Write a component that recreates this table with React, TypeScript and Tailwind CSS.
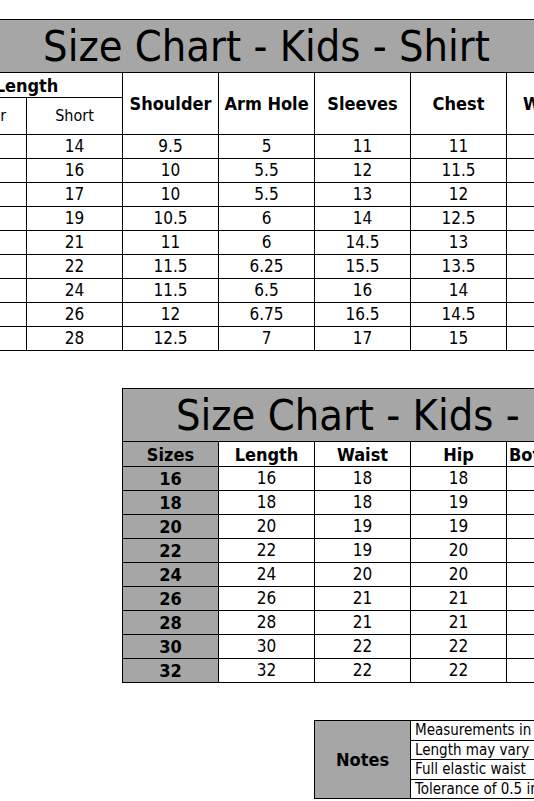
import React from "react";

const shirtRows = [
  ["14", "9.5", "5", "11", "11"],
  ["16", "10", "5.5", "12", "11.5"],
  ["17", "10", "5.5", "13", "12"],
  ["19", "10.5", "6", "14", "12.5"],
  ["21", "11", "6", "14.5", "13"],
  ["22", "11.5", "6.25", "15.5", "13.5"],
  ["24", "11.5", "6.5", "16", "14"],
  ["26", "12", "6.75", "16.5", "14.5"],
  ["28", "12.5", "7", "17", "15"],
];

const pantRows = [
  ["16", "16", "18", "18"],
  ["18", "18", "18", "19"],
  ["20", "20", "19", "19"],
  ["22", "22", "19", "20"],
  ["24", "24", "20", "20"],
  ["26", "26", "21", "21"],
  ["28", "28", "21", "21"],
  ["30", "30", "22", "22"],
  ["32", "32", "22", "22"],
];

const notes = [
  "Measurements in inches",
  "Length may vary by style",
  "Full elastic waist",
  "Tolerance of 0.5 inch",
];

const cell = "border-r border-b border-black flex items-center justify-center whitespace-nowrap overflow-hidden";

export default function App() {
  return (
    <div className="w-[534px] h-[801px] overflow-hidden bg-white text-black font-['DejaVu_Sans_Condensed','DejaVu_Sans',sans-serif]">
      <div className="pt-[19px]">
        {/* Shirt table */}
        <div className="ml-[-70px] w-max grid grid-cols-[repeat(7,96px)] grid-rows-[53px_25px_37px_repeat(9,24px)] border-l border-t border-black">
          <div className={`${cell} col-span-7 bg-[#a6a6a6] text-[43px] leading-none`}>
            Size Chart - Kids - Shirt
          </div>
          <div className={`${cell} col-span-2 font-bold text-[18px]`}>Length</div>
          <div className={`${cell} row-span-2 font-bold text-[18px]`}>Shoulder</div>
          <div className={`${cell} row-span-2 font-bold text-[18px]`}>Arm Hole</div>
          <div className={`${cell} row-span-2 font-bold text-[18px]`}>Sleeves</div>
          <div className={`${cell} row-span-2 font-bold text-[18px]`}>Chest</div>
          <div className={`${cell} row-span-2 font-bold text-[18px] !justify-start pl-[16px]`}>Waist</div>
          <div className={`${cell} text-[16px]`}>Regular</div>
          <div className={`${cell} text-[16px]`}>Short</div>
          {shirtRows.map((r, i) => (
            <React.Fragment key={i}>
              <div className={cell}></div>
              {r.map((v, j) => (
                <div key={j} className={`${cell} text-[17px]`}>{v}</div>
              ))}
              <div className={cell}></div>
            </React.Fragment>
          ))}
        </div>

        {/* Pant table */}
        <div className="mt-[37px] ml-[122px] w-max grid grid-cols-[repeat(6,96px)] grid-rows-[53px_25px_repeat(9,24px)] border-l border-t border-black">
          <div className={`${cell} col-span-6 bg-[#a6a6a6] text-[43px] leading-none !justify-start pl-[53px]`}>
            Size Chart - Kids - Pant
          </div>
          <div className={`${cell} bg-[#a6a6a6] font-bold text-[18px]`}>Sizes</div>
          <div className={`${cell} font-bold text-[18px]`}>Length</div>
          <div className={`${cell} font-bold text-[18px]`}>Waist</div>
          <div className={`${cell} font-bold text-[18px]`}>Hip</div>
          <div className={`${cell} font-bold text-[18px] !justify-start pl-[2px]`}>Bottom</div>
          <div className={cell}></div>
          {pantRows.map((r, i) => (
            <React.Fragment key={i}>
              <div className={`${cell} bg-[#a6a6a6] font-bold text-[18px]`}>{r[0]}</div>
              <div className={`${cell} text-[17px]`}>{r[1]}</div>
              <div className={`${cell} text-[17px]`}>{r[2]}</div>
              <div className={`${cell} text-[17px]`}>{r[3]}</div>
              <div className={cell}></div>
              <div className={cell}></div>
            </React.Fragment>
          ))}
        </div>

        {/* Notes */}
        <div className="mt-[37px] ml-[314px] w-max grid grid-cols-[96px_300px] grid-rows-[20px_19px_20px_19px] border-l border-t border-black">
          <div className={`${cell} row-span-4 bg-[#a6a6a6] font-bold text-[18px]`}>Notes</div>
          {notes.map((n, i) => (
            <div key={i} className={`${cell} !justify-start pl-[4px] text-[15px]`}>{n}</div>
          ))}
        </div>
      </div>
    </div>
  );
}
